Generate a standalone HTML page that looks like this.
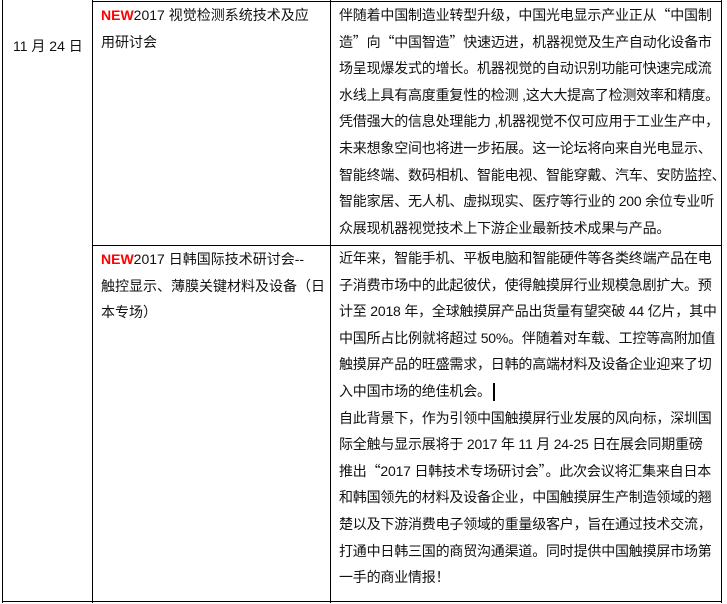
<!DOCTYPE html>
<html><head><meta charset="utf-8"><style>
body{margin:0;width:727px;height:604px;background:#fff;position:relative;overflow:hidden;font-family:"Liberation Sans","Noto Sans CJK SC",sans-serif;font-size:14px;color:#111}
.l{position:absolute;background:#000}
.t{position:absolute;line-height:26.6px;white-space:nowrap}
.c{letter-spacing:-0.2px;width:381px;overflow:hidden}
.n{color:#f00;font-weight:bold}
.q{font-family:"Noto Sans CJK SC",sans-serif}
</style></head><body>
<div class="l" style="left:2px;top:0;width:1px;height:603px"></div>
<div class="l" style="left:92px;top:0;width:1px;height:603px"></div>
<div class="l" style="left:330px;top:0;width:1px;height:603px"></div>
<div class="l" style="left:721px;top:0;width:1px;height:603px"></div>
<div class="l" style="left:92px;top:1px;width:630px;height:1px"></div>
<div class="l" style="left:92px;top:245px;width:630px;height:1px"></div>
<div class="l" style="left:2px;top:601px;width:720px;height:1px"></div>

<div class="t" style="left:13px;top:33px">11 月 24 日</div>

<div class="t" style="left:101px;top:2px"><span class="n">NEW</span>2017 视觉检测系统技术及应<br>用研讨会</div>
<div class="t" style="left:101px;top:246px"><span class="n">NEW</span>2017 日韩国际技术研讨会--<br>触控显示、薄膜关键材料及设备（日<br>本专场）</div>

<div class="t c" style="left:339px;top:2px">伴随着中国制造业转型升级，中国光电显示产业正从<span class="q">“</span>中国制<br>造<span class="q">”</span>向<span class="q">“</span>中国智造<span class="q">”</span>快速迈进，机器视觉及生产自动化设备市<br>场呈现爆发式的增长。机器视觉的自动识别功能可快速完成流<br>水线上具有高度重复性的检测 ,这大大提高了检测效率和精度。<br>凭借强大的信息处理能力 ,机器视觉不仅可应用于工业生产中，<br>未来想象空间也将进一步拓展。这一论坛将向来自光电显示、<br>智能终端、数码相机、智能电视、智能穿戴、汽车、安防监控、<br>智能家居、无人机、虚拟现实、医疗等行业的 200 余位专业听<br>众展现机器视觉技术上下游企业最新技术成果与产品。</div>

<div class="t c" style="left:339px;top:245px">近年来，智能手机、平板电脑和智能硬件等各类终端产品在电<br>子消费市场中的此起彼伏，使得触摸屏行业规模急剧扩大。预<br>计至 2018 年，全球触摸屏产品出货量有望突破 44 亿片，其中<br>中国所占比例就将超过 50%。伴随着对车载、工控等高附加值<br>触摸屏产品的旺盛需求，日韩的高端材料及设备企业迎来了切<br>入中国市场的绝佳机会。<span style="display:inline-block;width:2px;height:18px;background:#000;vertical-align:middle;margin-left:2px"></span><br>自此背景下，作为引领中国触摸屏行业发展的风向标，深圳国<br>际全触与显示展将于 2017 年 11 月 24-25 日在展会同期重磅<br>推出<span class="q">“</span>2017 日韩技术专场研讨会<span class="q">”</span>。此次会议将汇集来自日本<br>和韩国领先的材料及设备企业，中国触摸屏生产制造领域的翘<br>楚以及下游消费电子领域的重量级客户，旨在通过技术交流，<br>打通中日韩三国的商贸沟通渠道。同时提供中国触摸屏市场第<br>一手的商业情报！</div>
</body></html>
